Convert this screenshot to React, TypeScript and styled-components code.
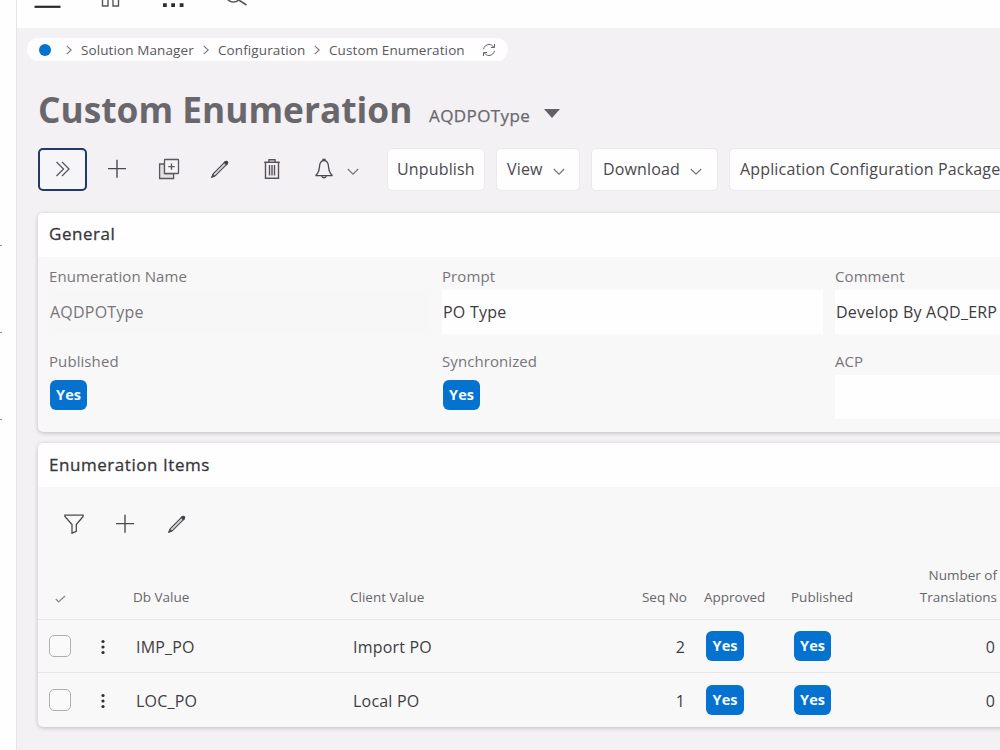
import React from "react";
import styled, { createGlobalStyle } from "styled-components";

const GlobalStyle = createGlobalStyle`
  * { box-sizing: border-box; }
  html, body { margin: 0; padding: 0; overflow: hidden; }
  body { font-family: "Open Sans", "Noto Sans", sans-serif; color: #3f3d42; background: #f3f1f4; }
`;

const Page = styled.div`
  display: flex;
  width: 1000px;
  height: 750px;
  overflow: hidden;
`;

const SideRail = styled.aside`
  flex: none;
  width: 16px;
  background: #fefefe;
  display: flex;
  flex-direction: column;
  gap: 86px;
  padding-top: 245px;
`;

const RailMark = styled.span`
  flex: none;
  width: 2px;
  height: 1px;
  background: #8d8d8d;
`;

const Main = styled.main`
  flex: 1;
  min-width: 0;
  border-left: 1px solid #e6e4e8;
  display: flex;
  flex-direction: column;
  overflow: hidden;
`;

const TopBar = styled.header`
  flex: none;
  height: 28px;
  background: #fefefe;
`;

const Content = styled.div`
  flex: 1;
  width: 1100px;
  padding: 10px 0 0 21px;
  display: flex;
  flex-direction: column;
`;

const Breadcrumb = styled.nav`
  display: flex;
  align-items: center;
  width: 481px;
  height: 23px;
  margin-left: -11px;
  padding-left: 12px;
  border-radius: 12px;
  background: #fefefe;
  color: #5a585d;
`;

const Dot = styled.span`
  width: 12px;
  height: 12px;
  border-radius: 50%;
  background: #0572d0;
  margin-right: 15px;
`;

const Crumb = styled.span<{ $w: number }>`
  width: ${(p) => p.$w}px;
  font-size: 13.5px;
  line-height: 22px;
  letter-spacing: 0.1px;
  white-space: nowrap;
  margin: 0 8px 0 9px;
`;

const TitleRow = styled.div`
  display: flex;
  height: 50px;
  margin-top: 24px;
  line-height: 50px;
  white-space: nowrap;
`;

const Title = styled.h1`
  margin: 0;
  width: 391px;
  font-size: 35.3px;
  font-weight: 700;
  line-height: 49px;
  color: #69676c;
`;

const RecordName = styled.span`
  width: 115px;
  padding-top: 6px;
  font-size: 17px;
  font-weight: 500;
  letter-spacing: 0.4px;
  -webkit-text-stroke: 0.25px currentColor;
  color: #6a686d;
`;

const Caret = styled.span`
  align-self: center;
  margin-top: 7px;
  border: 8px solid transparent;
  border-top: 9px solid #626065;
  border-bottom: 0;
`;

const Toolbar = styled.div`
  display: flex;
  align-items: center;
  height: 43px;
  margin-top: 13px;
`;

const ExpandButton = styled.button`
  width: 49px;
  height: 43px;
  padding: 0 0 2px;
  border: 2px solid #223a66;
  border-radius: 5px;
  background: #f6f5f8;
  display: grid;
  place-items: center;
`;

const IconSlot = styled.span<{ $w: number }>`
  width: ${(p) => p.$w}px;
  padding-bottom: 2px;
  display: grid;
  place-items: center;
`;

const BellMenu = styled.span`
  display: flex;
  align-items: center;
  gap: 13px;
  width: 92px;
  padding: 0 0 2px 19px;
`;

const CommandButton = styled.button<{ $w: number; $pad?: number }>`
  flex: none;
  width: ${(p) => p.$w}px;
  height: 43px;
  margin-right: 11px;
  padding: 0 0 2px ${(p) => p.$pad ?? 9}px;
  display: flex;
  align-items: center;
  gap: 10px;
  border: 1px solid #eae8eb;
  border-radius: 5px;
  background: #fefefe;
  color: #4a484d;
  font-family: inherit;
  font-size: 16px;
  letter-spacing: 0.16px;
  white-space: nowrap;
`;

const Card = styled.section<{ $h: number; $mt: number }>`
  flex: none;
  height: ${(p) => p.$h}px;
  margin-top: ${(p) => p.$mt}px;
  border-radius: 5px;
  background: #f8f8f8;
  box-shadow: 0 1px 4px rgba(0, 0, 0, 0.22);
  overflow: hidden;
`;

const CardHeader = styled.h2<{ $line?: number }>`
  margin: 0;
  height: 44px;
  padding: 0 0 0 11px;
  background: #fefefe;
  font-size: 17px;
  font-weight: 500;
  letter-spacing: 0.55px;
  -webkit-text-stroke: 0.3px currentColor;
  line-height: ${(p) => p.$line ?? 43}px;
  color: #38363b;
`;

const Fields = styled.div`
  display: grid;
  grid-template-columns: repeat(3, 381px);
  grid-template-rows: 85px 85px;
  column-gap: 12px;
  padding: 8px 0 0 11px;
`;

const Field = styled.div`
  display: flex;
  flex-direction: column;
`;

const Label = styled.label`
  height: 25px;
  font-size: 15px;
  line-height: 23px;
  letter-spacing: 0.08px;
  color: #77757a;
`;

const Value = styled.div<{ $readonly?: boolean }>`
  height: 44px;
  padding-left: 1px;
  font-size: 16px;
  line-height: 45px;
  letter-spacing: 0.22px;
  color: ${(p) => (p.$readonly ? "#77757a" : "#3d3b40")};
  background: ${(p) => (p.$readonly ? "#f7f7f7" : "#fefefe")};
`;

const Badge = styled.span<{ $w?: number }>`
  display: block;
  width: ${(p) => p.$w ?? 37}px;
  height: 30px;
  border-radius: 6px;
  background: #0572d0;
  color: #f4faff;
  font-size: 14.5px;
  font-weight: 700;
  line-height: 29px;
  text-align: center;
`;

const FieldBadge = styled(Badge)`
  margin: 5px 0 0 1px;
`;

const ListTools = styled.div`
  display: flex;
  height: 76px;
  align-items: center;
  padding-left: 10px;
`;

const GridRow = styled.div<{ $h: number }>`
  display: grid;
  grid-template-columns: 44px 42px 222px 258px 86px 87px 98px 125px 1fr;
  align-items: center;
  height: ${(p) => p.$h}px;
  border-bottom: 1px solid #e5e5e6;
  &:last-child { border-bottom: 0; }
`;

const HeaderRow = styled(GridRow)`
  align-items: end;
  padding-bottom: 11px;
`;

const HeadCell = styled.span<{ $right?: number; $left?: number }>`
  font-size: 13.5px;
  line-height: 22px;
  color: #68666b;
  white-space: nowrap;
  text-align: ${(p) => (p.$right === undefined ? "left" : "right")};
  padding-right: ${(p) => p.$right ?? 0}px;
  padding-left: ${(p) => p.$left ?? 0}px;
`;

const CheckCell = styled.span`
  padding: 0 0 4px 17px;
`;

const Cell = styled.span<{ $right?: number; $left?: number }>`
  font-size: 16px;
  line-height: 22px;
  padding-top: 1px;
  letter-spacing: 0.2px;
  color: #3f3d42;
  text-align: ${(p) => (p.$right === undefined ? "left" : "right")};
  padding-right: ${(p) => p.$right ?? 0}px;
  padding-left: ${(p) => p.$left ?? 0}px;
`;

const CheckBox = styled.span`
  width: 22px;
  height: 22px;
  margin-left: 11px;
  border: 1px solid #b0aeb3;
  border-radius: 5px;
  background: #fafafa;
`;

const KebabCell = styled.span`
  display: grid;
  place-items: center;
  padding-top: 1px;
`;

const BadgeCell = styled.span<{ $left: number }>`
  padding-left: ${(p) => p.$left}px;
`;

const Drawing = styled.svg`
  display: block;
  flex: none;
`;

const Svg = ({ w, h = w, sw = 1.3, color = "#4b494e", children }: {
  w: number; h?: number; sw?: number; color?: string; children: React.ReactNode;
}) => (
  <Drawing width={w} height={h} viewBox={`0 0 ${w} ${h}`} fill="none" stroke={color} strokeWidth={sw}>
    {children}
  </Drawing>
);

const ChevronRight = () => (
  <Svg w={6} h={10} sw={1.1} color="#77757a"><path d="M.7 .8 5.200 5 .7 9.200" /></Svg>
);
const ChevronDown = () => (
  <Svg w={12} h={14} sw={1.2} color="#77757a"><path d="M.8 7 6 12.200 11.200 7" /></Svg>
);
const Plus = () => <Svg w={20} sw={1.4}><path d="M10 .8v18M1 9.600h18" /></Svg>;
const Pencil = () => (
  <Svg w={20} sw={1.1}>
    <path d="M2 18 3.400 14.500 15 2.800Q16.200 1.800 17.200 2.700 18.200 3.700 17.200 5L5.500 16.600Z" fill="#d4d3d8" />
    <path d="M14.200 3.600 15.200 2.600Q16.300 1.800 17.200 2.700 18.200 3.700 17.200 5L16.400 5.800Z" fill="#3a383d" />
    <path d="m2 18 .9-2.300 1.500 1.500z" fill="#3a383d" />
  </Svg>
);
const Copy = () => (
  <Svg w={22} sw={1.3} color="#5a585e">
    <path d="M6.500 6H1.600v14.500h14v-5h-9.100z" fill="#e5e1e0" />
    <rect x="6.500" y="1.500" width="14" height="14" rx=".5" fill="#f5f4f7" />
    <path d="M13.500 5.400v6.400M10.300 8.600h6.400" />
  </Svg>
);
const Trash = () => (
  <Svg w={18} h={22} sw={1.4} color="#57525c">
    <path d="M1.200 4.200h15.600M6 4V1.700h6V4M2.500 4.200v16.100h13V4.200M6.500 7v10.500M9 7v10.500M11.500 7v10.500" />
  </Svg>
);
const Bell = () => (
  <Svg w={20} h={22} sw={1.3}>
    <path d="M9 2.500V1.300h2v1.200M2 17c3-2 3.200-5.500 3.600-9.300C5.900 4.500 7.600 2.600 10 2.600s4.100 1.900 4.400 5.100C14.800 11.500 15 15 18 17v.6H2Z" />
    <path d="M7.800 18c.2 2.300 4.200 2.300 4.400 0" />
  </Svg>
);
const Filter = () => (
  <Svg w={20} h={20} sw={1.3}><path d="M.9 1.200h18.200v1.200L12.300 10.500v6.800L8 19.200V10.500L.9 2.400Z" /></Svg>
);
const Kebab = () => (
  <Drawing width="4" height="16" viewBox="0 0 4 16" fill="#2f2d32">
    <circle cx="2" cy="2.500" r="1.600" /><circle cx="2" cy="8" r="1.600" /><circle cx="2" cy="13.500" r="1.600" />
  </Drawing>
);
const Refresh = () => (
  <Svg w={14} h={14} sw={1} color="#66646a">
    <path d="M1.500 6.200C2 3.500 4.300 1.500 7 1.500c2 0 3.600.9 4.600 2.600M12.500 1v3.500H9M12.500 7.800C12 10.500 9.700 12.500 7 12.500c-2 0-3.600-.9-4.600-2.600M1.500 13V9.500H5" />
  </Svg>
);
const TopIcons = () => (
  <Drawing width="260" height="10" viewBox="0 0 260 10" fill="none" stroke="#58565b">
    <path d="M17.500 6.800h26" stroke="#2b292e" strokeWidth="2.200" />
    <path d="M85.500-5V6h5.500V-5M96-5V6h5.500V-5" strokeWidth="1.400" />
    <path d="M146 5.200h3.800M154.200 5.200h3.800M162.700 5.200h3.800" stroke="#2f2d32" strokeWidth="3.800" />
    <circle cx="216.500" cy="-5.500" r="7.600" strokeWidth="1.500" />
    <path d="m221-.5 8.500 5.500" strokeWidth="1.600" />
  </Drawing>
);

const rows = [
  { db: "IMP_PO", client: "Import PO", seq: 2, translations: 0, h: 53 },
  { db: "LOC_PO", client: "Local PO", seq: 1, translations: 0, h: 54 },
];

export default function App() {
  return (
    <Page>
      <GlobalStyle />
      <SideRail><RailMark /><RailMark /><RailMark /></SideRail>
      <Main>
        <TopBar><TopIcons /></TopBar>
        <Content>
          <Breadcrumb>
            <Dot />
            <ChevronRight /><Crumb $w={114}>Solution Manager</Crumb>
            <ChevronRight /><Crumb $w={88}>Configuration</Crumb>
            <ChevronRight /><Crumb $w={145}>Custom Enumeration</Crumb>
            <Refresh />
          </Breadcrumb>
          <TitleRow>
            <Title>Custom Enumeration</Title>
            <RecordName>AQDPOType</RecordName>
            <Caret />
          </TitleRow>
          <Toolbar>
            <ExpandButton>
              <Svg w={16} h={16} color="#5a585e"><path d="M1.500 1 8.500 8l-7 7M7 1l7 7-7 7" /></Svg>
            </ExpandButton>
            <IconSlot $w={60}><Plus /></IconSlot>
            <IconSlot $w={44}><Copy /></IconSlot>
            <IconSlot $w={58}><Pencil /></IconSlot>
            <IconSlot $w={46}><Trash /></IconSlot>
            <BellMenu><Bell /><ChevronDown /></BellMenu>
            <CommandButton $w={98}>Unpublish</CommandButton>
            <CommandButton $w={84} $pad={10}>View <ChevronDown /></CommandButton>
            <CommandButton $w={127} $pad={11}>Download <ChevronDown /></CommandButton>
            <CommandButton $w={310} $pad={10}>Application Configuration Package</CommandButton>
          </Toolbar>
          <Card $h={219} $mt={22}>
            <CardHeader $line={42}>General</CardHeader>
            <Fields>
              <Field><Label>Enumeration Name</Label><Value $readonly>AQDPOType</Value></Field>
              <Field><Label>Prompt</Label><Value>PO Type</Value></Field>
              <Field><Label>Comment</Label><Value>Develop By AQD_ERP</Value></Field>
              <Field><Label>Published</Label><FieldBadge>Yes</FieldBadge></Field>
              <Field><Label>Synchronized</Label><FieldBadge>Yes</FieldBadge></Field>
              <Field><Label>ACP</Label><Value /></Field>
            </Fields>
          </Card>
          <Card $h={284} $mt={11}>
            <CardHeader>Enumeration Items</CardHeader>
            <ListTools>
              <IconSlot $w={52}><Filter /></IconSlot>
              <IconSlot $w={50}><Plus /></IconSlot>
              <IconSlot $w={54}><Pencil /></IconSlot>
            </ListTools>
            <HeaderRow $h={57}>
              <CheckCell>
                <Svg w={11} h={10} sw={1.2} color="#88868b"><path d="m.8 5 2.800 3 6.500-6" /></Svg>
              </CheckCell>
              <span />
              <HeadCell $left={9}>Db Value</HeadCell>
              <HeadCell $left={4}>Client Value</HeadCell>
              <HeadCell $right={3}>Seq No</HeadCell>
              <HeadCell $left={14}>Approved</HeadCell>
              <HeadCell $left={14}>Published</HeadCell>
              <HeadCell $right={3}>Number of<br />Translations</HeadCell>
            </HeaderRow>
            {rows.map((r) => (
              <GridRow key={r.db} $h={r.h}>
                <CheckBox />
                <KebabCell><Kebab /></KebabCell>
                <Cell $left={12}>{r.db}</Cell>
                <Cell $left={7}>{r.client}</Cell>
                <Cell $right={5}>{r.seq}</Cell>
                <BadgeCell $left={16}><Badge $w={38}>Yes</Badge></BadgeCell>
                <BadgeCell $left={17}><Badge>Yes</Badge></BadgeCell>
                <Cell $right={5}>{r.translations}</Cell>
              </GridRow>
            ))}
          </Card>
        </Content>
      </Main>
    </Page>
  );
}
